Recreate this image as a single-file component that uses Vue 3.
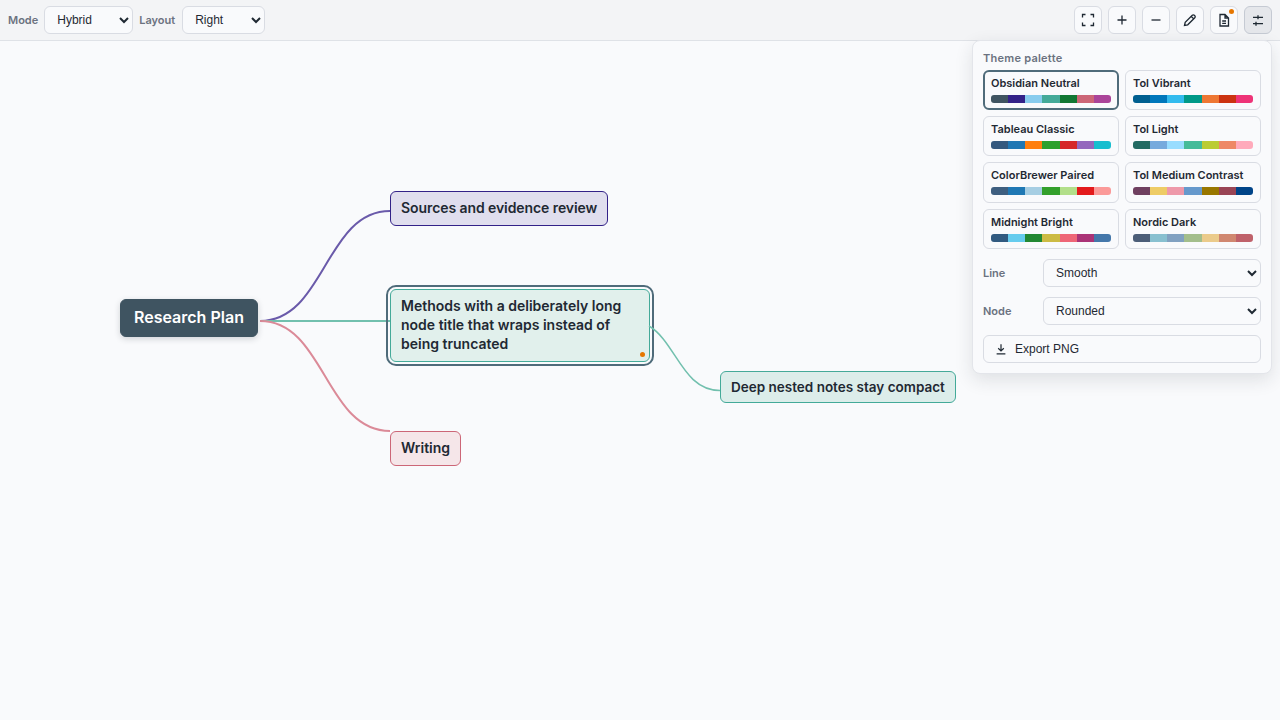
<template>
  <div class="page">
    <header class="toolbar">
      <label class="field-label">Mode</label>
      <select class="select mode-select">
        <option>Hybrid</option>
        <option>Mindmap</option>
        <option>Outline</option>
      </select>
      <label class="field-label">Layout</label>
      <select class="select layout-select">
        <option>Right</option>
        <option>Left</option>
        <option>Both</option>
      </select>

      <div class="tools">
        <button class="tool" title="Fit">
          <svg viewBox="0 0 16 16"><path d="M2.5 5.5v-3h3M10.5 2.5h3v3M13.5 10.5v3h-3M5.5 13.5h-3v-3" /></svg>
        </button>
        <button class="tool" title="Zoom in">
          <svg viewBox="0 0 16 16"><path d="M8 3.5v9M3.5 8h9" /></svg>
        </button>
        <button class="tool" title="Zoom out">
          <svg viewBox="0 0 16 16"><path d="M3.5 8h9" /></svg>
        </button>
        <button class="tool" title="Edit">
          <svg viewBox="0 0 16 16"><path d="M2.5 13.5l.7-3.2L10.3 3.2a1.4 1.4 0 0 1 2 0l.5.5a1.4 1.4 0 0 1 0 2L5.7 12.8l-3.2.7zM9.2 4.4l2.4 2.4" /></svg>
        </button>
        <button class="tool tool-note" title="Notes">
          <svg viewBox="0 0 16 16"><path d="M4 2.5h5l3.5 3.5v8H4zM9 2.5V6h3.5M6.2 9H10M6.2 11.3H10" /></svg>
          <span class="note-dot"></span>
        </button>
        <button class="tool active" title="Settings">
          <svg viewBox="0 0 16 16"><path d="M3 5.3h10M8 3.3v4M3 11.7h10M6 9.7v4" /></svg>
        </button>
      </div>
    </header>

    <main class="canvas">
      <svg class="edges" width="1280" height="679" viewBox="0 41 1280 679">
        <path v-for="e in edges" :key="e.d" :d="e.d" :stroke="e.color" :stroke-width="e.width" fill="none" />
      </svg>

      <div
        v-for="n in nodes"
        :key="n.text"
        class="node"
        :class="n.cls"
        :style="{ left: n.x + 'px', top: n.y + 'px', width: n.w + 'px' }"
      >
        {{ n.text }}
        <span v-if="n.note" class="node-dot"></span>
      </div>

      <!-- this branch leaves the selection ring, so it goes over the nodes -->
      <svg class="edges" width="1280" height="679" viewBox="0 41 1280 679">
        <path d="M649 326C676.2 342.1 682.4 390.5 720 390.5" stroke="#72c0ae" stroke-width="1.5" fill="none" />
      </svg>

      <aside class="panel">
        <div class="panel-title">Theme palette</div>
        <div class="themes">
          <div v-for="(t, i) in themes" :key="t.name" class="theme" :class="{ current: i === 0 }">
            <div class="theme-name">{{ t.name }}</div>
            <div class="strip">
              <span v-for="c in t.colors" :key="c" :style="{ background: c }"></span>
            </div>
          </div>
        </div>
        <div class="row">
          <label class="field-label">Line</label>
          <select class="select wide">
            <option>Smooth</option>
            <option>Straight</option>
          </select>
        </div>
        <div class="row">
          <label class="field-label">Node</label>
          <select class="select wide">
            <option>Rounded</option>
            <option>Square</option>
          </select>
        </div>
        <button class="export">
          <svg viewBox="0 0 16 16"><path d="M8 2.5v7.5M4.8 7.2 8 10.2l3.2-3M3 13.5h10" /></svg>
          Export PNG
        </button>
      </aside>
    </main>
  </div>
</template>

<script setup>
const nodes = [
  { text: 'Research Plan', x: 120, y: 258, w: 138, cls: 'root single' },
  { text: 'Sources and evidence review', x: 390, y: 150, w: 218, cls: 'purple single' },
  { text: 'Methods with a deliberately long node title that wraps instead of being truncated', x: 390, y: 248, w: 260, cls: 'teal selected', note: true },
  { text: 'Writing', x: 390, y: 390, w: 71, cls: 'pink single' },
  { text: 'Deep nested notes stay compact', x: 720, y: 330, w: 236, cls: 'deep single' }
]

const edges = [
  { d: 'M260 321C325 321 325 211 390 211', color: '#6a5aaa', width: 2 },
  { d: 'M260 321H390', color: '#72c0ae', width: 2 },
  { d: 'M260 321C325 321 325 431 390 431', color: '#db8a98', width: 2 }
]

const themes = [
  { name: 'Obsidian Neutral', colors: ['#3f5461', '#332288', '#88ccee', '#44aa99', '#117733', '#cc6677', '#aa4499'] },
  { name: 'Tol Vibrant', colors: ['#005f90', '#0077bb', '#33bbee', '#009988', '#ee7733', '#cc3311', '#ee3377'] },
  { name: 'Tableau Classic', colors: ['#34597f', '#1f77b4', '#ff7f0e', '#2ca02c', '#d62728', '#9467bd', '#17becf'] },
  { name: 'Tol Light', colors: ['#236b63', '#77aadd', '#99ddff', '#44bb99', '#bbcc33', '#ee8866', '#ffaabb'] },
  { name: 'ColorBrewer Paired', colors: ['#3e5f80', '#1f78b4', '#a6cee3', '#33a02c', '#b2df8a', '#e31a1c', '#fb9a99'] },
  { name: 'Tol Medium Contrast', colors: ['#6f4060', '#eecc66', '#ee99aa', '#6699cc', '#997700', '#994455', '#004488'] },
  { name: 'Midnight Bright', colors: ['#315a80', '#66ccee', '#228833', '#ccbb44', '#ee6677', '#aa3377', '#4477aa'] },
  { name: 'Nordic Dark', colors: ['#4c5e78', '#88c0d0', '#81a1c1', '#a3be8c', '#ebcb8b', '#d08770', '#bf616a'] }
]
</script>

<style>
html,
body {
  margin: 0;
  background: #f9fafc;
}
</style>

<style scoped>
.page {
  width: 1280px;
  height: 720px;
  overflow: hidden;
  display: flex;
  flex-direction: column;
  font-family: Inter, "Liberation Sans", sans-serif;
  color: #1f2933;
}

.toolbar {
  height: 40px;
  flex: none;
  display: flex;
  align-items: center;
  gap: 6px;
  padding: 0 8px;
  background: #f3f4f6;
  border-bottom: 1px solid #dfe2e7;
}

.field-label {
  font-size: 11px;
  font-weight: 600;
  color: #6b7280;
}

.select {
  height: 28px;
  box-sizing: border-box;
  padding: 0 8px;
  font-family: "Liberation Sans", Arial, sans-serif;
  font-size: 12px;
  color: #1f2933;
  background: #f9fafc;
  border: 1px solid #d9dce3;
  border-radius: 6px;
}

.mode-select {
  width: 89px;
}

.layout-select {
  width: 83px;
  margin-left: 1px;
}

.tools {
  margin-left: auto;
  display: flex;
  gap: 6px;
}

.tool {
  position: relative;
  width: 28px;
  height: 28px;
  padding: 0;
  display: flex;
  align-items: center;
  justify-content: center;
  background: #f9fafc;
  border: 1px solid #d9dce3;
  border-radius: 6px;
}

.tool.active {
  background: #e5e7eb;
  border-color: #c5cad3;
}

.tool svg {
  width: 16px;
  height: 16px;
  fill: none;
  stroke: #1f2933;
  stroke-width: 1.3;
}

.export svg {
  width: 14px;
  height: 14px;
  fill: none;
  stroke: #1f2933;
  stroke-width: 1.4;
}

.note-dot {
  position: absolute;
  top: 2px;
  right: 3px;
  width: 5px;
  height: 5px;
  border-radius: 50%;
  background: #e67700;
}

.canvas {
  position: relative;
  flex: 1;
  background: #f9fafc;
}

.edges {
  position: absolute;
  left: 0;
  top: 0;
  pointer-events: none;
}

.node {
  position: absolute;
  box-sizing: border-box;
  padding: 6px 10px 8px;
  font-size: 14px;
  font-weight: 600;
  line-height: 19px;
  border: 1px solid;
  border-radius: 6px;
}

.single {
  white-space: nowrap;
}

.root {
  padding: 7px 13px 9px;
  font-size: 16px;
  line-height: 20px;
  color: #fff;
  background: #3f5461;
  border-color: #3f5461;
  box-shadow: 0 2px 6px rgba(31, 41, 51, 0.18);
}

.purple {
  letter-spacing: -0.08px;
  background: #e0deee;
  border-color: #332288;
}

.teal {
  background: #e1f0ec;
  border-color: #44aa99;
}

.pink {
  background: #f5e6e9;
  border-color: #cc6677;
}

.deep {
  padding: 6px 10px 5px;
  font-size: 13.5px;
  background: #dcedea;
  border-color: #44aa99;
}

.selected {
  outline: 2px solid #4f6b7a;
  outline-offset: 2px;
}

.node-dot {
  position: absolute;
  right: 4px;
  bottom: 4px;
  width: 5px;
  height: 5px;
  border-radius: 50%;
  background: #e67700;
}

.panel {
  position: absolute;
  top: -1px;
  left: 972px;
  width: 300px;
  height: 334px;
  box-sizing: border-box;
  padding: 10px;
  background: #f9fafc;
  border: 1px solid #e3e5ea;
  border-radius: 8px;
  box-shadow: 0 6px 18px rgba(31, 41, 51, 0.12);
}

.panel-title {
  font-size: 11px;
  font-weight: 600;
  line-height: 14px;
  letter-spacing: 0.25px;
  color: #6b7280;
  margin-bottom: 5px;
}

.themes {
  display: grid;
  grid-template-columns: 136px 136px;
  grid-auto-rows: 40.2px;
  gap: 6px;
}

.theme {
  box-sizing: border-box;
  padding: 5px 7px;
  border: 1px solid #d9dce3;
  border-radius: 6px;
}

.theme.current {
  border: 2px solid #4f6b7a;
  padding: 4px 6px;
}

.theme-name {
  font-size: 11px;
  font-weight: 600;
  line-height: 14px;
  color: #1f2933;
  white-space: nowrap;
}

.strip {
  display: flex;
  height: 8px;
  margin-top: 5px;
  border-radius: 3px;
  overflow: hidden;
}

.strip span {
  flex: 1;
}

.row {
  display: flex;
  align-items: center;
  margin-top: 10px;
}

.row .field-label {
  width: 60px;
}

.wide {
  width: 218px;
}

.export {
  width: 278px;
  height: 28px;
  margin-top: 10px;
  padding: 0 10px;
  display: flex;
  align-items: center;
  gap: 7px;
  font-family: "Liberation Sans", Arial, sans-serif;
  font-size: 12px;
  color: #1f2933;
  background: #f9fafc;
  border: 1px solid #d9dce3;
  border-radius: 6px;
}
</style>
